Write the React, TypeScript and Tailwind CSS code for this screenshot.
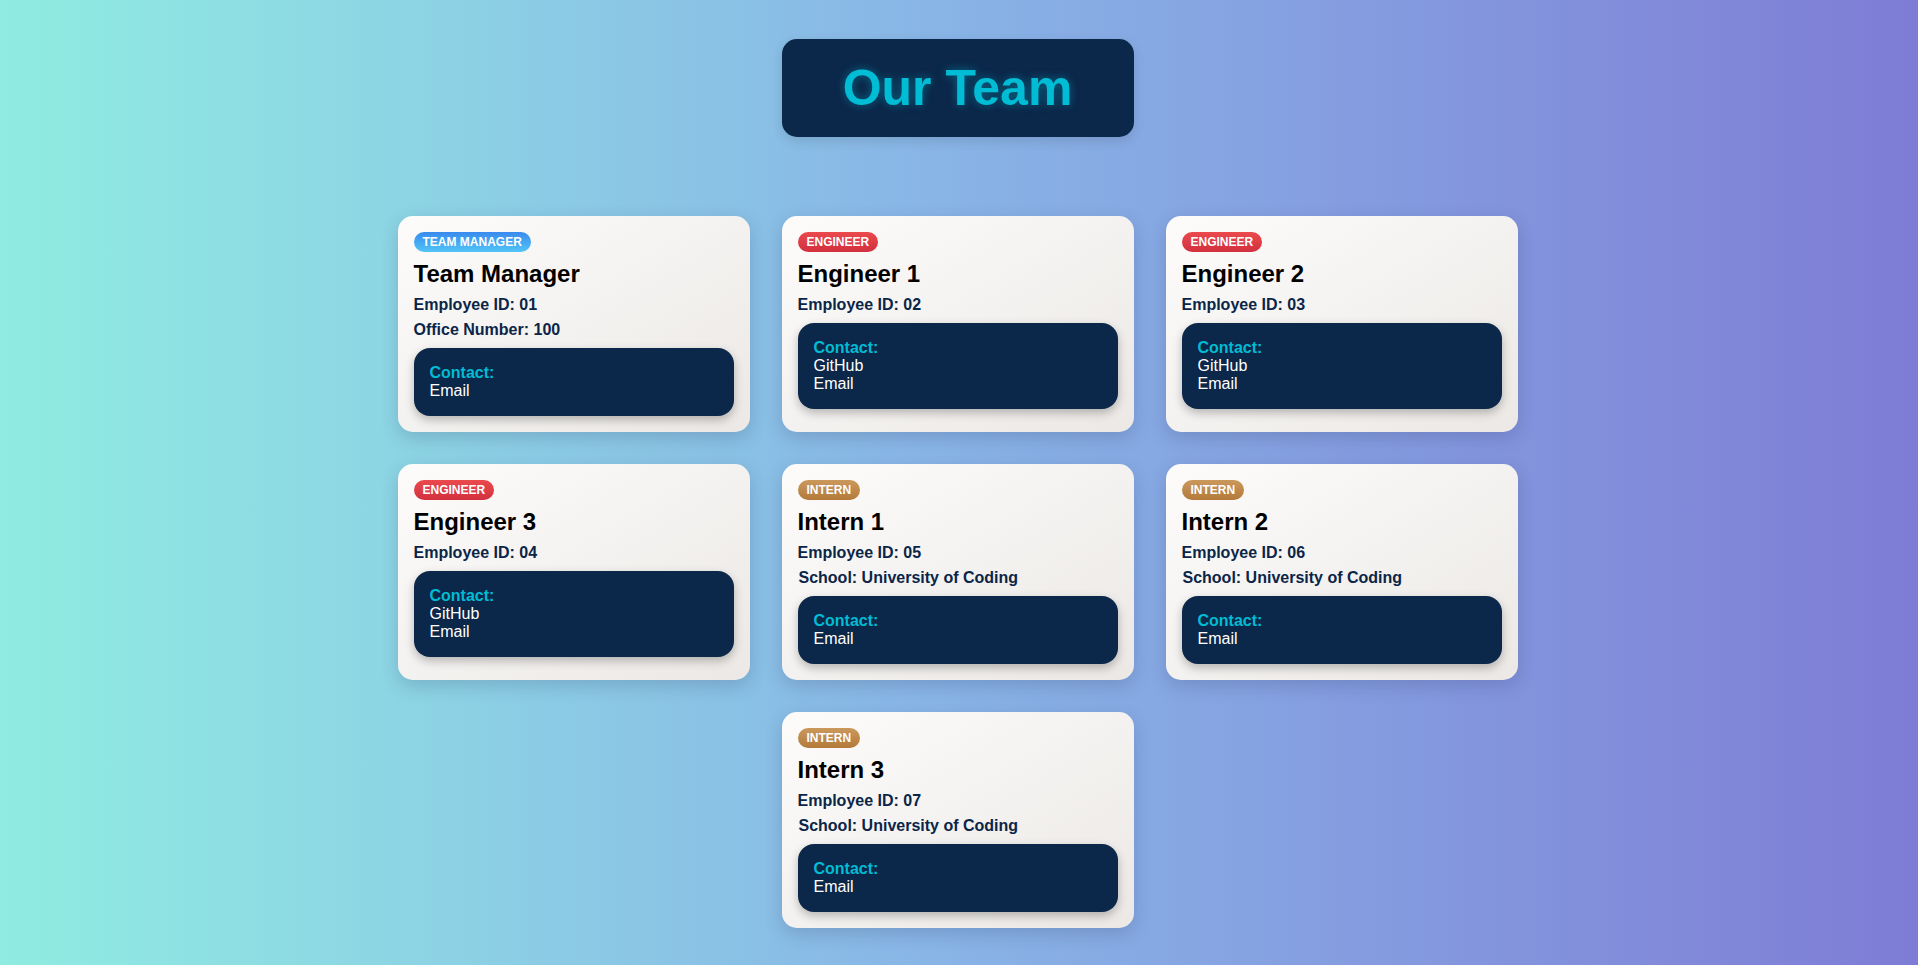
/**
 * App — página "Our Team" com os cartões dos membros da equipe
 */

type Role = 'manager' | 'engineer' | 'intern'

interface IMember {
  role: Role
  name: string
  id: string
  office?: string
  github?: boolean
  school?: string
}

const MEMBERS: IMember[] = [
  { role: 'manager', name: 'Team Manager', id: '01', office: '100' },
  { role: 'engineer', name: 'Engineer 1', id: '02', github: true },
  { role: 'engineer', name: 'Engineer 2', id: '03', github: true },
  { role: 'engineer', name: 'Engineer 3', id: '04', github: true },
  { role: 'intern', name: 'Intern 1', id: '05', school: 'University of Coding' },
  { role: 'intern', name: 'Intern 2', id: '06', school: 'University of Coding' },
  { role: 'intern', name: 'Intern 3', id: '07', school: 'University of Coding' },
]

const BADGES: Record<Role, { label: string; className: string }> = {
  manager: { label: 'Team Manager', className: 'bg-gradient-to-b from-[#3a8aee] to-[#52c4f6]' },
  engineer: { label: 'Engineer', className: 'bg-gradient-to-b from-[#ea4a4c] to-[#d2303e]' },
  intern: { label: 'Intern', className: 'bg-gradient-to-b from-[#cb985c] to-[#b37a3a]' },
}

function MemberCard({ member }: { member: IMember }) {
  const badge = BADGES[member.role]

  return (
    <div className="w-[352px] p-4 rounded-[15px] bg-gradient-to-br from-[#fdfcfb] to-[#ebe8e5] shadow-[0_6px_18px_rgba(40,50,90,0.2)] flex flex-col items-start">
      <span
        className={`${badge.className} px-[9px] py-[3px] rounded-full text-[12px] leading-[14px] font-bold uppercase text-white`}
      >
        {badge.label}
      </span>

      <h2 className="mt-2 text-[24px] leading-[28px] font-bold text-black">{member.name}</h2>

      <div className="mt-1 text-[16px] leading-[25px] font-bold text-[#0b2548]">
        <p>Employee ID: {member.id}</p>
        {member.office && <p>Office Number: {member.office}</p>}
        {member.school && <p className="pl-px">School: {member.school}</p>}
      </div>

      {/* Contato */}
      <div className="mt-[6px] w-full px-4 py-4 rounded-2xl bg-[#0b2749] shadow-[0_4px_10px_rgba(0,0,0,0.25)] text-[16px] leading-[18px]">
        <p className="font-bold text-[#00bcd4]">Contact:</p>
        {member.github && <p className="text-white">GitHub</p>}
        <p className="text-white">Email</p>
      </div>
    </div>
  )
}

export default function App() {
  return (
    <div
      className="min-h-screen w-full bg-gradient-to-r from-[#8fece1] via-[#88b3e6] to-[#7e7cd5] flex flex-col items-center pt-[39px] pb-[37px] pr-[3px]"
      style={{ fontFamily: '"Liberation Sans", Arial, sans-serif' }}
    >
      <div className="w-[352px] h-[98px] rounded-[15px] bg-[#0b2749] shadow-[0_4px_12px_rgba(0,0,0,0.12)] flex items-center justify-center">
        <h1 className="text-[50px] leading-none font-bold text-[#00bcd4] [text-shadow:0_0_10px_rgba(0,188,212,0.45)]">
          Our Team
        </h1>
      </div>

      <div className="mt-[79px] w-[1120px] flex flex-wrap justify-center gap-8">
        {MEMBERS.map((m) => (
          <MemberCard key={m.id} member={m} />
        ))}
      </div>
    </div>
  )
}
